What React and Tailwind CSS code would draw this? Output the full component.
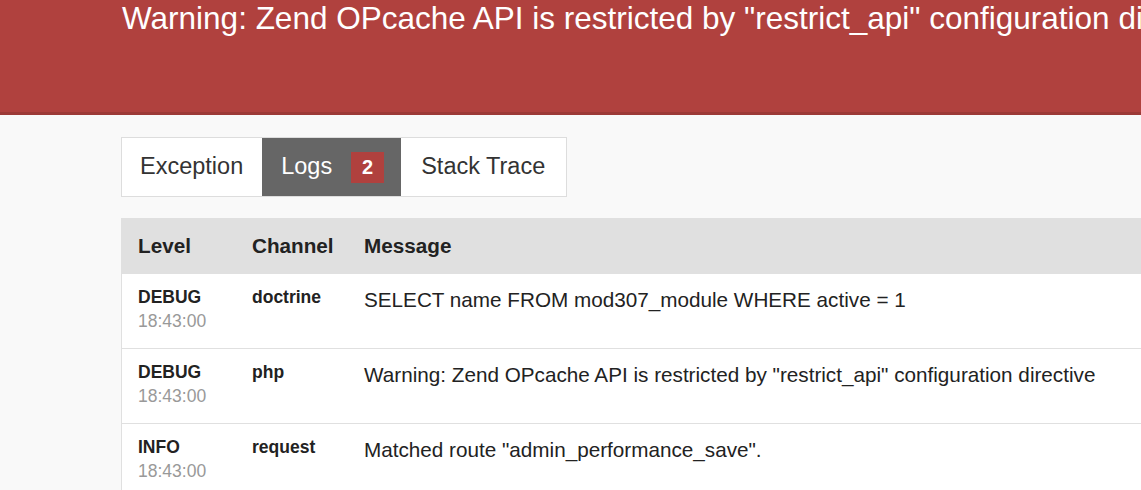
import React from 'react';

const logs = [
    { level: 'DEBUG', time: '18:43:00', channel: 'doctrine', message: 'SELECT name FROM mod307_module WHERE active = 1' },
    { level: 'DEBUG', time: '18:43:00', channel: 'php', message: 'Warning: Zend OPcache API is restricted by "restrict_api" configuration directive' },
    { level: 'INFO', time: '18:43:00', channel: 'request', message: 'Matched route "admin_performance_save".' },
];

function App() {
    return (
        <div className="h-[490px] w-[1141px] overflow-hidden bg-[#f9f9f9] font-['Liberation_Sans',Arial,sans-serif] text-[#222]">
            <div className="h-[115px] bg-[#b0413e] border-b-[3px] border-[#9c3a37] pl-[122px]">
                <h1 className="whitespace-nowrap text-[31.5px] leading-[36px] text-white">
                    Warning: Zend OPcache API is restricted by "restrict_api" configuration directive
                </h1>
            </div>

            <div className="pl-[121px] pt-[22px]">
                <ul className="inline-flex h-[60px] border border-[#dddddd] bg-white text-[23.5px] text-[#333]">
                    <li className="flex items-center pl-[18px] pr-[19px]">Exception</li>
                    <li className="flex items-center gap-[19px] bg-[#666666] pl-[19px] pr-[17px] text-white">
                        Logs
                        <span className="flex h-[31px] w-[33px] items-center justify-center bg-[#b0413e] text-[20px] font-bold">2</span>
                    </li>
                    <li className="flex items-center pl-[20px] pr-[21px]">Stack Trace</li>
                </ul>

                <div className="mt-[21px] w-[1200px] border border-[#e0e0e0] bg-white">
                    <div className="grid h-[54px] grid-cols-[116px_112px_1fr] items-center bg-[#e0e0e0] text-[20.7px] font-bold">
                        <div className="px-[16px]">Level</div>
                        <div className="px-[14px]">Channel</div>
                        <div className="px-[14px]">Message</div>
                    </div>
                    {logs.map((log, i) => (
                        <div key={i} className="grid h-[75px] grid-cols-[116px_112px_1fr] border-t border-[#e0e0e0] pt-[11px]">
                            <div className="px-[16px] leading-[24px]">
                                <div className="text-[17.5px] font-bold">{log.level}</div>
                                <div className="text-[17.5px] text-[#999999]">{log.time}</div>
                            </div>
                            <div className="px-[14px] text-[17.5px] font-bold leading-[24px]">{log.channel}</div>
                            <div className="px-[14px] pt-[1px] text-[20.7px] leading-[27px] whitespace-nowrap">{log.message}</div>
                        </div>
                    ))}
                </div>
            </div>
        </div>
    );
}

export default App;
